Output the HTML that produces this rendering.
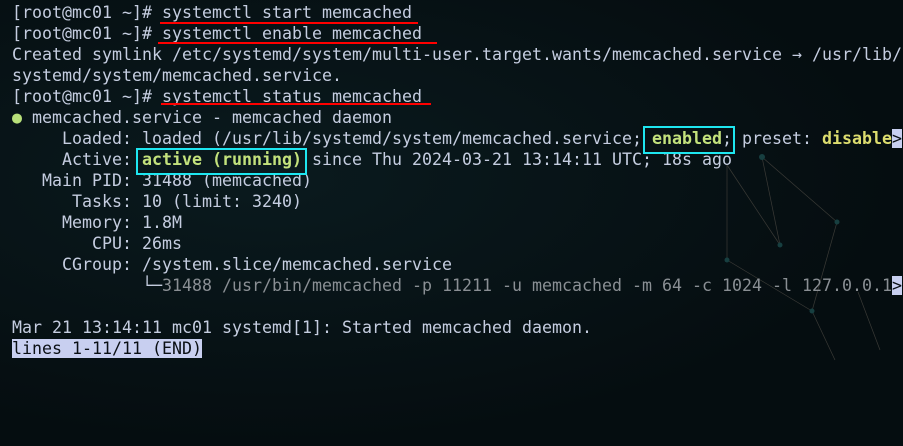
<!DOCTYPE html>
<html><head><style>
html,body{margin:0;padding:0;}
body{width:903px;height:446px;overflow:hidden;background:#061013;position:relative;
background:radial-gradient(ellipse at 30% 40%,#0a1a1e 0%,#050d10 70%);}
pre{position:absolute;left:12px;top:2px;margin:0;font-family:"DejaVu Sans Mono","Liberation Mono",monospace;font-size:16.62px;line-height:21px;color:#c5cde0;white-space:pre;}
.g{color:#c3e27c;font-weight:bold}
.y{color:#dcdc6e;font-weight:bold}
.d{color:#8a8f94}
.c{background:#c8cff0;color:#0a0f14}
.dot{color:#b8e07a}
.ul{position:absolute;height:2px;background:#ff0000}
.bx{position:absolute;border:2px solid #1ee6f0;box-sizing:border-box}
svg{position:absolute;left:0;top:0}
</style></head><body>
<svg width="903" height="446">
<g stroke="#3a3a36" stroke-width="0.7" fill="none">
<line x1="727" y1="165" x2="727" y2="260"/><line x1="727" y1="165" x2="780" y2="245"/>
<line x1="762" y1="157" x2="780" y2="245"/><line x1="762" y1="157" x2="837" y2="222"/>
<line x1="727" y1="260" x2="812" y2="311"/><line x1="837" y1="222" x2="812" y2="311"/>
<line x1="812" y1="311" x2="835" y2="360"/><line x1="858" y1="292" x2="880" y2="350"/>
</g>
<g fill="#173f40"><circle cx="727" cy="260" r="2.5"/><circle cx="780" cy="245" r="2.5"/><circle cx="762" cy="157" r="3"/><circle cx="837" cy="222" r="2.5"/><circle cx="812" cy="311" r="2.5"/></g>
</svg>
<pre>[root@mc01 ~]# systemctl start memcached
[root@mc01 ~]# systemctl enable memcached
Created symlink /etc/systemd/system/multi-user.target.wants/memcached.service → /usr/lib/
systemd/system/memcached.service.
[root@mc01 ~]# systemctl status memcached
<span class="dot">●</span> memcached.service - memcached daemon
     Loaded: loaded (/usr/lib/systemd/system/memcached.service; <span class="g">enabled</span>; preset: <span class="y">disable</span><span class="c">&gt;</span>
     Active: <span class="g">active (running)</span> since Thu 2024-03-21 13:14:11 UTC; 18s ago
   Main PID: 31488 (memcached)
      Tasks: 10 (limit: 3240)
     Memory: 1.8M
        CPU: 26ms
     CGroup: /system.slice/memcached.service
             └─<span class="d">31488 /usr/bin/memcached -p 11211 -u memcached -m 64 -c 1024 -l 127.0.0.1</span><span class="c">&gt;</span>

Mar 21 13:14:11 mc01 systemd[1]: Started memcached daemon.
<span class="c">lines 1-11/11 (END)</span></pre>
<div class="ul" style="left:160px;top:22px;width:258px"></div>
<div class="ul" style="left:158px;top:42px;width:279px"></div>
<div class="ul" style="left:161px;top:103px;width:270px"></div>
<div class="bx" style="left:643px;top:126px;width:92px;height:28px"></div>
<div class="bx" style="left:136px;top:148px;width:171px;height:27px"></div>
</body></html>
